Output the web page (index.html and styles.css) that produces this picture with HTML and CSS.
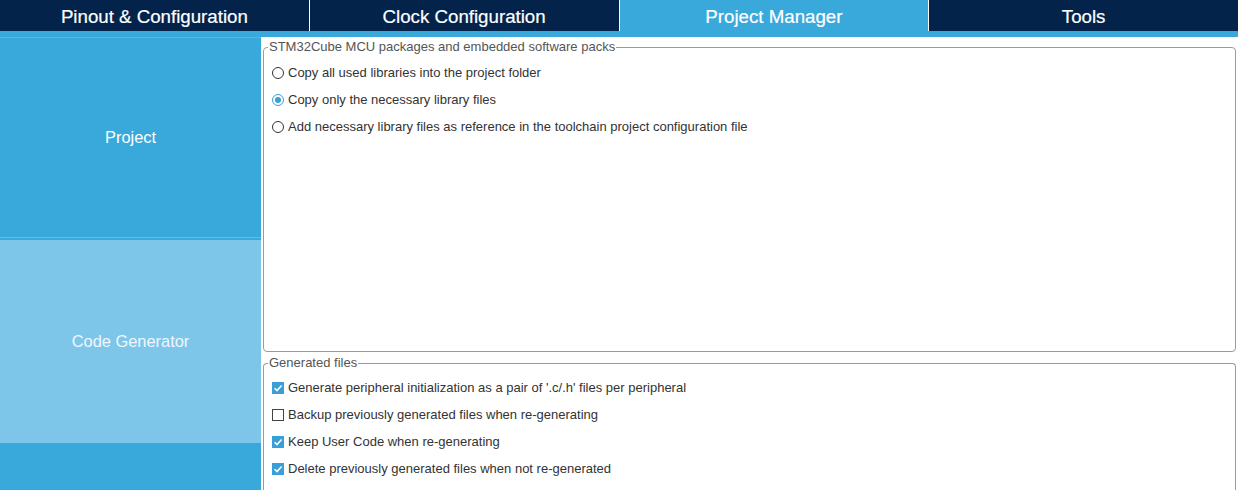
FILE: index.html
```html
<!DOCTYPE html>
<html>
<head>
<meta charset="utf-8">
<link rel="stylesheet" href="styles.css">
</head>
<body>
<div class="app">
  <nav class="tabs">
    <div class="tab">Pinout &amp; Configuration</div>
    <div class="tab">Clock Configuration</div>
    <div class="tab active">Project Manager</div>
    <div class="tab">Tools</div>
  </nav>
  <div class="strip"></div>
  <div class="main">
    <aside class="sidebar">
      <div class="side-btn project">Project</div>
      <div class="side-btn codegen">Code Generator</div>
      <div class="side-rest"></div>
    </aside>
    <section class="content">
      <fieldset class="group packs">
        <legend>STM32Cube MCU packages and embedded software packs</legend>
        <div class="opts">
          <div class="opt"><span class="radio"></span><span>Copy all used libraries into the project folder</span></div>
          <div class="opt"><span class="radio on"></span><span>Copy only the necessary library files</span></div>
          <div class="opt"><span class="radio"></span><span>Add necessary library files as reference in the toolchain project configuration file</span></div>
        </div>
      </fieldset>
      <fieldset class="group gen">
        <legend>Generated files</legend>
        <div class="opts">
          <div class="opt"><span class="check on"><svg viewBox="0 0 12 12" width="12" height="12"><path d="M2.6 6.2 L5 8.6 L9.6 3.6" fill="none" stroke="#fff" stroke-width="1.5"/></svg></span><span>Generate peripheral initialization as a pair of '.c/.h' files per peripheral</span></div>
          <div class="opt"><span class="check"></span><span>Backup previously generated files when re-generating</span></div>
          <div class="opt"><span class="check on"><svg viewBox="0 0 12 12" width="12" height="12"><path d="M2.6 6.2 L5 8.6 L9.6 3.6" fill="none" stroke="#fff" stroke-width="1.5"/></svg></span><span>Keep User Code when re-generating</span></div>
          <div class="opt"><span class="check on"><svg viewBox="0 0 12 12" width="12" height="12"><path d="M2.6 6.2 L5 8.6 L9.6 3.6" fill="none" stroke="#fff" stroke-width="1.5"/></svg></span><span>Delete previously generated files when not re-generated</span></div>
        </div>
      </fieldset>
    </section>
  </div>
</div>
</body>
</html>
```

FILE: styles.css
```css
* { box-sizing: border-box; }
html, body {
  margin: 0;
  padding: 0;
  background: #ffffff;
  overflow: hidden;
}
body {
  font-family: "Liberation Sans", Arial, sans-serif;
  width: 1238px;
  height: 490px;
}
.app {
  display: flex;
  flex-direction: column;
  height: 490px;
}
.tabs {
  display: flex;
  height: 31px;
  background: #03234b;
}
.tab {
  flex: 1;
  display: flex;
  align-items: center;
  justify-content: center;
  color: #ffffff;
  font-size: 18.7px;
  -webkit-text-stroke: 0.2px #ffffff;
  border-left: 1px solid #ffffff;
  padding-top: 2px;
}
.tab:first-child { border-left: none; }
.tab.active { background: #39a9db; }
.strip {
  height: 6px;
  background: #39a9db;
}
.main {
  flex: 1;
  display: flex;
  min-height: 0;
}
.sidebar {
  width: 261px;
  display: flex;
  flex-direction: column;
  background: #39a9db;
}
.side-btn {
  display: flex;
  align-items: center;
  justify-content: center;
  font-size: 16.4px;
}
.project {
  height: 201px;
  color: #ffffff;
  border-top: 1px solid #55b8e6;
  border-bottom: 1px solid #5fc0ec;
  margin-bottom: 2px;
}
.codegen {
  height: 203px;
  background: #7dc6ea;
  color: #eef8fd;
}
.side-rest { flex: 1; }
.content {
  flex: 1;
  padding: 3px 2px 0 2px;
  display: flex;
  flex-direction: column;
  gap: 4px;
}
.group {
  margin: 0;
  padding: 0 8px;
  border: 1px solid #9a9a9a;
  border-radius: 4px;
  min-width: 0;
}
.group legend {
  font-size: 13px;
  line-height: 14px;
  color: #555555;
  padding: 0 1px;
  margin-left: -4px;
}
.packs { height: 312px; }
.gen { flex: 1; border-bottom: none; border-bottom-left-radius: 0; border-bottom-right-radius: 0; }
.opts {
  display: flex;
  flex-direction: column;
}
.packs .opts { padding-top: 5px; }
.gen .opts { padding-top: 4px; }
.opt {
  height: 27px;
  display: flex;
  align-items: center;
  gap: 4px;
  font-size: 13px;
  color: #333333;
}
.radio {
  width: 12px;
  height: 12px;
  border-radius: 50%;
  border: 1px solid #333333;
  background: #ffffff;
  flex: none;
  display: flex;
  align-items: center;
  justify-content: center;
}
.radio.on { border-color: #3a9fd6; }
.radio.on::after {
  content: "";
  width: 6px;
  height: 6px;
  border-radius: 50%;
  background: #3a9fd6;
}
.check {
  width: 12px;
  height: 12px;
  border: 1px solid #444444;
  background: #ffffff;
  flex: none;
  display: flex;
}
.check.on {
  border: none;
  background: #3a9fd6;
}
```
